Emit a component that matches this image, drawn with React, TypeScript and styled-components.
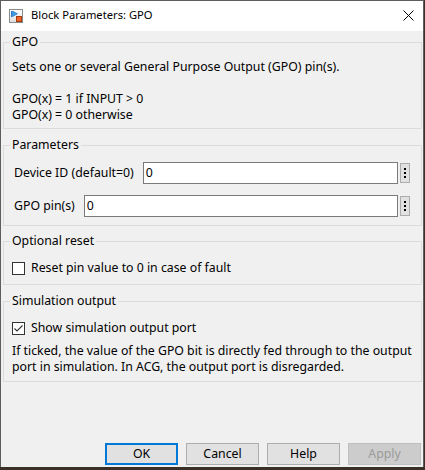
import React from "react";
import styled, { createGlobalStyle } from "styled-components";

const Global = createGlobalStyle`
  html, body { margin: 0; padding: 0; background: #3a3028; }
  body {
    font-family: "Noto Sans", "Open Sans", sans-serif;
    font-size: 12.3px;
    color: #000;
  }
  * { box-sizing: border-box; }
`;

const Window = styled.div`
  width: 424px;
  height: 467px;
  border: 1px solid #5e5e5e;
  border-bottom: none;
  background: #f0f0f0;
  display: flex;
  flex-direction: column;
`;

const TitleBar = styled.div`
  height: 30px;
  flex-shrink: 0;
  background: #fff;
  display: flex;
  align-items: center;
  padding: 0 9px 0 8px;
`;

const TitleText = styled.span`
  margin-left: 8px;
  font-size: 11.2px;
  line-height: 16px;
  margin-top: -2px;
`;

const CloseBox = styled.div`
  margin-left: auto;
  width: 12px;
  height: 12px;
  display: flex;
  align-items: center;
  justify-content: center;
  margin-top: -2px;
`;

const Body = styled.div`
  flex: 1;
  display: flex;
  flex-direction: column;
  padding: 3px 1px 2px 2px;
`;

const Group = styled.fieldset<{ $top: number; $pt: number; $pb: number }>`
  margin: ${(p) => p.$top}px 0 0 0;
  border: 1px solid #dcdcdc;
  padding: ${(p) => p.$pt}px 4px ${(p) => p.$pb}px 8px;
  min-width: 0;
`;

const Legend = styled.legend`
  padding: 0 2px;
  margin-left: -2px;
  line-height: 16px;
`;

const TextBlock = styled.div`
  line-height: 16px;
  white-space: pre-line;
`;

const Rows = styled.div`
  display: flex;
  flex-direction: column;
  gap: 11px;
  padding: 0 7px 0 2px;
`;

const Row = styled.div`
  display: flex;
  align-items: center;
  height: 22px;
`;

const Label = styled.span`
  margin-right: 9px;
  white-space: nowrap;
  line-height: 16px;
`;

const Field = styled.div`
  flex: 1;
  height: 22px;
  background: #fff;
  border: 1px solid #7a7a7a;
  display: flex;
  align-items: center;
  padding-left: 2px;
  line-height: 16px;
`;

const DotsButton = styled.div`
  width: 10px;
  height: 20px;
  margin-left: 2px;
  border: 1px solid #adadad;
  background: #e1e1e1;
  display: flex;
  flex-direction: column;
  align-items: center;
  justify-content: center;
  gap: 2px;
`;

const Dot = styled.span`
  width: 2px;
  height: 2px;
  background: #000;
`;

const CheckRow = styled.label`
  display: flex;
  align-items: center;
  height: 16px;
  line-height: 16px;
  gap: 6px;
`;

const Box = styled.span`
  width: 13px;
  height: 13px;
  border: 1px solid #333;
  background: #fff;
  display: flex;
  align-items: center;
  justify-content: center;
`;

const Note = styled.div`
  margin-top: 7px;
  line-height: 16px;
`;

const Spacer = styled.div`
  flex: 1;
`;

const ButtonRow = styled.div`
  display: flex;
  justify-content: flex-end;
  gap: 8px;
  padding-right: 1px;
`;

const Button = styled.div<{ $default?: boolean; $disabled?: boolean }>`
  width: 73px;
  height: 22px;
  display: flex;
  align-items: center;
  justify-content: center;
  background: ${(p) => (p.$disabled ? "#cccccc" : "#e1e1e1")};
  border: ${(p) =>
    p.$default ? "2px solid #0078d7" : p.$disabled ? "1px solid #bfbfbf" : "1px solid #adadad"};
  color: ${(p) => (p.$disabled ? "#9a9a9a" : "#000")};
  line-height: 16px;
`;

const BlockIcon = () => (
  <svg width="14" height="14" viewBox="0 0 14 14">
    <defs>
      <linearGradient id="ibg" x1="0" y1="0" x2="0" y2="1">
        <stop offset="0" stopColor="#ffffff" />
        <stop offset="1" stopColor="#dcdcdc" />
      </linearGradient>
    </defs>
    <rect x="0.5" y="0.5" width="13" height="13" fill="url(#ibg)" stroke="#8a8a8a" />
    <rect x="2" y="2" width="1.2" height="6" fill="#2a7fd0" />
    <path d="M3.5 2 L8.5 4.8 L3.5 7.6 Z" fill="#3d9be9" stroke="#1f6fb8" strokeWidth="0.6" />
    <rect x="7.5" y="7.5" width="5" height="5" fill="#f0642a" stroke="#a33a10" strokeWidth="1" />
  </svg>
);

const CloseIcon = () => (
  <svg width="11" height="11" viewBox="0 0 11 11">
    <path d="M0.5 0.5 L10.5 10.5 M10.5 0.5 L0.5 10.5" stroke="#000" strokeWidth="1" />
  </svg>
);

const Check = () => (
  <svg width="11" height="11" viewBox="0 0 11 11">
    <polyline points="1.5,5.5 4,8 9.5,2.5" fill="none" stroke="#333" strokeWidth="1.1" />
  </svg>
);

const Dots = () => (
  <DotsButton>
    <Dot />
    <Dot />
    <Dot />
  </DotsButton>
);

export default function App() {
  return (
    <>
      <Global />
      <Window>
        <TitleBar>
          <BlockIcon />
          <TitleText>Block Parameters: GPO</TitleText>
          <CloseBox>
            <CloseIcon />
          </CloseBox>
        </TitleBar>
        <Body>
          <Group $top={0} $pt={9} $pb={5}>
            <Legend>GPO</Legend>
            <TextBlock>
              {"Sets one or several General Purpose Output (GPO) pin(s).\n\nGPO(x) = 1 if INPUT > 0\nGPO(x) = 0 otherwise"}
            </TextBlock>
          </Group>
          <Group $top={8} $pt={9} $pb={8}>
            <Legend>Parameters</Legend>
            <Rows>
              <Row>
                <Label>Device ID (default=0)</Label>
                <Field>0</Field>
                <Dots />
              </Row>
              <Row>
                <Label>GPO pin(s)</Label>
                <Field>0</Field>
                <Dots />
              </Row>
            </Rows>
          </Group>
          <Group $top={7} $pt={11} $pb={8}>
            <Legend>Optional reset</Legend>
            <CheckRow>
              <Box />
              Reset pin value to 0 in case of fault
            </CheckRow>
          </Group>
          <Group $top={8} $pt={11} $pb={6}>
            <Legend>Simulation output</Legend>
            <CheckRow>
              <Box>
                <Check />
              </Box>
              Show simulation output port
            </CheckRow>
            <Note>
              If ticked, the value of the GPO bit is directly fed through to the output port in
              simulation. In ACG, the output port is disregarded.
            </Note>
          </Group>
          <Spacer />
          <ButtonRow>
            <Button $default>OK</Button>
            <Button>Cancel</Button>
            <Button>Help</Button>
            <Button $disabled>Apply</Button>
          </ButtonRow>
        </Body>
      </Window>
    </>
  );
}
